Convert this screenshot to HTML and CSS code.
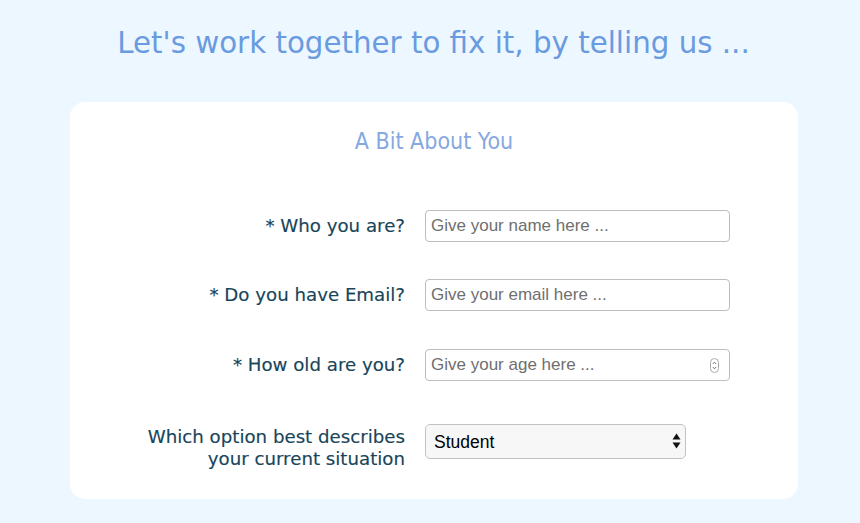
FILE: index.html
```html
<!DOCTYPE html>
<html>
<head>
<meta charset="utf-8">
<link rel="stylesheet" href="styles.css">
</head>
<body>
<h1 class="title">Let's work together to fix it, by telling us ...</h1>
<div class="card">
  <h2 class="card-title">A Bit About You</h2>
  <div class="form">
    <div class="row">
      <label class="label">* Who you are?</label>
      <input class="field" type="text" placeholder="Give your name here ...">
    </div>
    <div class="row">
      <label class="label">* Do you have Email?</label>
      <input class="field" type="text" placeholder="Give your email here ...">
    </div>
    <div class="row row-age">
      <label class="label">* How old are you?</label>
      <span class="field-wrap">
        <input class="field" type="text" placeholder="Give your age here ...">
        <svg class="spin" width="9" height="15" viewBox="0 0 9 15"><rect x="0.5" y="0.5" width="8" height="14" rx="4" fill="#fff" stroke="#aaa"/><path d="M2.8 6 L4.5 4.2 L6.2 6" fill="none" stroke="#666" stroke-width="0.9"/><path d="M2.8 9 L4.5 10.8 L6.2 9" fill="none" stroke="#666" stroke-width="0.9"/></svg>
      </span>
    </div>
    <div class="row row-last">
      <label class="label label-multi">Which option best describes your current situation</label>
      <span class="select-wrap">
        <select class="select"><option>Student</option></select>
        <svg class="arrows" width="9" height="16" viewBox="0 0 9 16"><path d="M0.5 6.5 L4.5 0.5 L8.5 6.5 Z" fill="#111"/><path d="M0.5 9.5 L4.5 15.5 L8.5 9.5 Z" fill="#111"/></svg>
      </span>
    </div>
  </div>
</div>
</body>
</html>
```
FILE: styles.css
```css
html, body {
  margin: 0;
  padding: 0;
}
body {
  background: #edf7ff;
  font-family: "DejaVu Sans", sans-serif;
}
.title {
  margin: 0;
  padding-top: 24px;
  height: 102px;
  box-sizing: border-box;
  text-align: center;
  font-weight: normal;
  font-size: 29.3px;
  line-height: 38px;
  color: #6a9be0;
  padding-left: 7px;
}
.card {
  margin-left: 70px;
  width: 728px;
  height: 397px;
  box-sizing: border-box;
  background: #fff;
  border-radius: 15px;
  padding-top: 26px;
}
.card-title {
  margin: 0;
  text-align: center;
  font-weight: normal;
  font-family: "DejaVu Sans Condensed", "DejaVu Sans", sans-serif;
  font-size: 23px;
  color: #86a8e0;
  line-height: 26px;
}
.form {
  margin-top: 56px;
  padding-left: 70px;
  display: flex;
  flex-direction: column;
  gap: 37px;
}
.row {
  display: flex;
  align-items: center;
  gap: 20px;
}
.row-age {
  margin-top: 1px;
}
.row-last {
  margin-top: 6px;
  align-items: flex-start;
}
.label {
  width: 265px;
  text-align: right;
  color: #17455a;
  font-size: 18.2px;
  line-height: 22px;
  -webkit-text-stroke: 0.15px #17455a;
}
.label-multi {
  margin-top: 2px;
}
.field-wrap, .select-wrap {
  position: relative;
  display: block;
}
.field {
  display: block;
  width: 305px;
  height: 32px;
  box-sizing: border-box;
  border: 1px solid #bdbdbd;
  border-radius: 4px;
  padding: 0 5px;
  font-family: "Liberation Sans", Arial, sans-serif;
  font-size: 17px;
  color: #333;
  background: #fff;
  outline: none;
}
.field::placeholder {
  color: #6f6f6f;
}
.spin {
  position: absolute;
  right: 11px;
  top: 9px;
}
.select {
  display: block;
  -webkit-appearance: none;
  appearance: none;
  width: 261px;
  height: 35px;
  box-sizing: border-box;
  border: 1px solid #c2c2c2;
  border-radius: 5px;
  background: #f7f7f7;
  padding: 0 8px;
  font-family: "Liberation Sans", Arial, sans-serif;
  font-size: 17.5px;
  color: #000;
  outline: none;
}
.arrows {
  position: absolute;
  right: 5px;
  top: 9px;
  pointer-events: none;
}
```
